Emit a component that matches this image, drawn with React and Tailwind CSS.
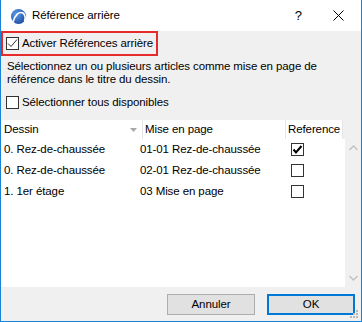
import React from 'react';

const font = { fontFamily: '"Liberation Sans", Arial, sans-serif' };

const rows = [
  { dessin: '0. Rez-de-chaussée', page: '01-01 Rez-de-chaussée', ref: true },
  { dessin: '0. Rez-de-chaussée', page: '02-01 Rez-de-chaussée', ref: false },
  { dessin: '1. 1er étage', page: '03 Mise en page', ref: false },
];

const Check = ({ checked, bold }) => (
  <div className="w-[13px] h-[13px] border border-[#333] bg-white flex items-center justify-center shrink-0">
    {checked && (
      <svg width="11" height="11" viewBox="0 0 11 11">
        <path
          d={bold ? 'M1.5 5.5 L4 8.5 L9.5 2' : 'M1 5.5 L4 8.5 L10 1.5'}
          fill="none"
          stroke={bold ? '#000' : '#333'}
          strokeWidth={bold ? 2 : 1}
        />
      </svg>
    )}
  </div>
);

const AppIcon = () => (
  <svg width="17" height="17" viewBox="0 0 17 17">
    <defs>
      <radialGradient id="g" cx="0.35" cy="0.35" r="0.7">
        <stop offset="0" stopColor="#5d9ce6" />
        <stop offset="1" stopColor="#1d4fa3" />
      </radialGradient>
    </defs>
    <circle cx="8.5" cy="8.5" r="7.5" fill="url(#g)" />
    <path d="M3 14 C5 7 9 3 13 5 C15 6.5 15.5 10 14.5 13" fill="none" stroke="#fff" strokeWidth="1.6" />
  </svg>
);

export default function App() {
  return (
    <div
      className="relative w-[362px] h-[322px] flex flex-col bg-[#f0f0f0] border-x border-b border-[#1883d7] text-[11.5px] tracking-[-0.1px] text-black"
      style={font}
    >
      {/* title bar */}
      <div className="h-[31px] bg-white flex items-center shrink-0">
        <div className="ml-[9px] mt-[1px]"><AppIcon /></div>
        <span className="ml-[5px] text-[11.5px]">Référence arrière</span>
        <span className="ml-auto mr-[31px] text-[13px]">?</span>
        <svg className="mr-[17px]" width="11" height="11" viewBox="0 0 11 11">
          <path d="M0.5 0.5 L10.5 10.5 M10.5 0.5 L0.5 10.5" stroke="#000" strokeWidth="1" />
        </svg>
      </div>

      {/* activate */}
      <div className="w-[157px] h-[25px] border-2 border-[#e62b2b] flex items-center pl-[3px] gap-[3px]">
        <Check checked />
        <span>Activer Références arrière</span>
      </div>

      <p className="mt-[4px] pl-[6px] leading-[13px]">
        Sélectionnez un ou plusieurs articles comme mise en page de
        <br />
        référence dans le titre du dessin.
      </p>

      <div className="mt-[10px] pl-[5px] flex items-center gap-[3px] h-[13px]">
        <Check />
        <span>Sélectionner tous disponibles</span>
      </div>

      {/* table */}
      <div className="mt-[11px] flex flex-col h-[167px]">
        <div className="flex h-[19px] shrink-0">
          <div className="w-[142px] bg-white border-r border-[#e5e5e5] flex items-center pl-[3px] relative">
            Dessin
            <svg className="absolute left-[129px] top-[8px]" width="7" height="4" viewBox="0 0 7 4">
              <path d="M0 0 L7 0 L3.5 4 Z" fill="#a8a8a8" />
            </svg>
          </div>
          <div className="w-[143px] bg-white border-r border-[#e5e5e5] flex items-center pl-[2px]">Mise en page</div>
          <div className="w-[57px] bg-white border-r border-[#e5e5e5] flex items-center pl-[2px]">Reference</div>
        </div>
        <div className="flex flex-1">
          <div className="w-[344px] bg-white flex flex-col">
            {rows.map((r, i) => (
              <div key={i} className="flex items-center h-[21px]">
                <div className="w-[139px] pl-[3px]">{r.dessin}</div>
                <div className="w-[151px]">{r.page}</div>
                <Check checked={r.ref} bold />
              </div>
            ))}
          </div>
          <div className="flex-1 flex flex-col items-center justify-between py-[6px]">
            <svg width="9" height="6" viewBox="0 0 9 6">
              <path d="M0.5 5 L4.5 1 L8.5 5" fill="none" stroke="#c2c2c2" strokeWidth="1.5" />
            </svg>
            <svg width="9" height="6" viewBox="0 0 9 6">
              <path d="M0.5 1 L4.5 5 L8.5 1" fill="none" stroke="#c2c2c2" strokeWidth="1.5" />
            </svg>
          </div>
        </div>
      </div>

      {/* buttons */}
      <div className="flex-1 flex justify-end items-start pt-[7px] pr-[6px] gap-[12px]">
        <button className="w-[88px] h-[21px] bg-[#e1e1e1] border border-[#adadad] flex items-center justify-center">
          Annuler
        </button>
        <button className="w-[88px] h-[21px] bg-[#e1e1e1] border-2 border-[#0078d7] flex items-center justify-center">
          OK
        </button>
      </div>

      {/* resize grip */}
      <svg className="absolute right-[2px] bottom-[2px]" width="9" height="9" viewBox="0 0 9 9">
        <g fill="#b8b8b8">
          <rect x="6" y="0" width="2" height="2" />
          <rect x="3" y="3" width="2" height="2" />
          <rect x="6" y="3" width="2" height="2" />
          <rect x="0" y="6" width="2" height="2" />
          <rect x="3" y="6" width="2" height="2" />
          <rect x="6" y="6" width="2" height="2" />
        </g>
      </svg>
    </div>
  );
}
